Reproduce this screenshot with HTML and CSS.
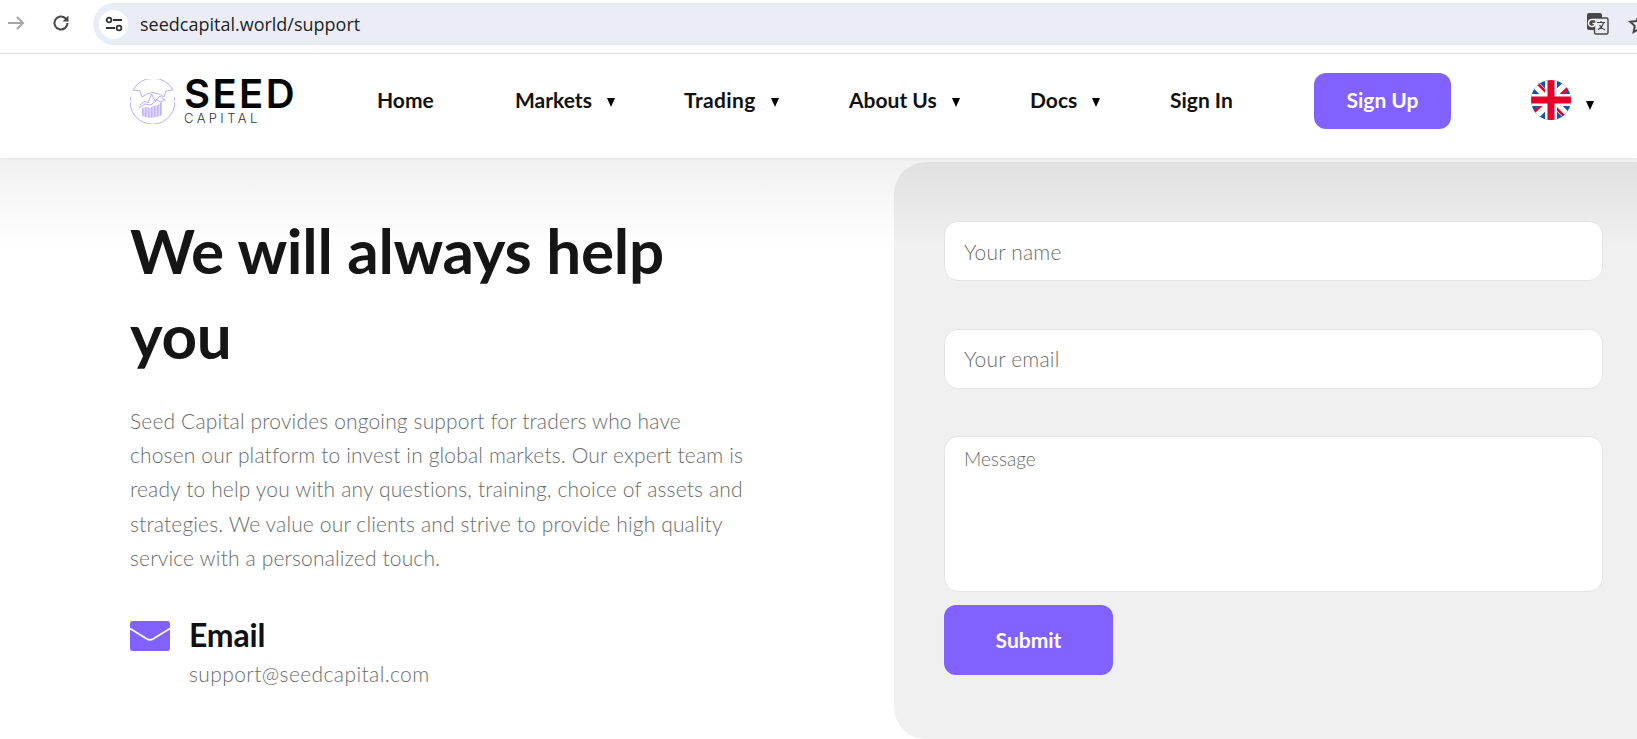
FILE: index.html
```html
<!DOCTYPE html>
<html lang="en">
<head>
    <meta charset="UTF-8">
    <meta name="viewport" content="width=device-width, initial-scale=1.0">
    <title>Support</title>
    <link rel="stylesheet" href="styles.css">
</head>
<body>
    <div class="browser-bar">
        <svg class="bar-icon arrow" width="20" height="20" viewBox="0 0 20 20"><path d="M2 10h15M11 4l6 6-6 6" fill="none" stroke="#a6a6a6" stroke-width="2"/></svg>
        <svg class="bar-icon reload" width="20" height="20" viewBox="0 0 20 20"><path d="M16.500 10a6.500 6.500 0 1 1-2-4.700L16.500 7" fill="none" stroke="#474747" stroke-width="2"/><path d="M17.500 2.500v6h-6z" fill="#474747"/></svg>
        <div class="omnibox">
            <span class="site-icon">
                <svg width="18" height="16" viewBox="0 0 18 16"><circle cx="4" cy="4" r="2.400" fill="none" stroke="#333" stroke-width="1.800"/><path d="M8 4h9M1 12h9" stroke="#333" stroke-width="2" fill="none"/><circle cx="14" cy="12" r="2.400" fill="none" stroke="#333" stroke-width="1.800"/></svg>
            </span>
            <span class="url">seedcapital.world/support</span>
            <svg class="translate" width="22" height="22" viewBox="0 0 22 22"><rect x="0" y="0" width="15" height="17" rx="2" fill="#474747"/><rect x="7.500" y="5" width="13.500" height="16" rx="1.500" fill="#eaedf6" stroke="#474747" stroke-width="1.400"/><path d="M10.500 3.500h-4a3.500 3.500 0 1 0 3.500 4H7" transform="translate(-1.500 3)" fill="none" stroke="#fff" stroke-width="1.500"/><path d="M10 9.500h8M14 8v2M16.500 9.500c-1 4-3 6-5.500 7M12.500 12c1 2 3 4 5.500 5" fill="none" stroke="#474747" stroke-width="1.200"/></svg>
            <svg class="star" width="22" height="22" viewBox="0 0 22 22"><path d="M11 2.500l2.600 5.600 6.100.7-4.500 4.200 1.200 6-5.400-3-5.400 3 1.200-6-4.500-4.200 6.100-.7z" fill="none" stroke="#474747" stroke-width="2"/></svg>
        </div>
    </div>

    <header class="nav">
        <a class="logo">
            <svg class="logo-mark" width="45" height="45" viewBox="0 0 45 45">
                <defs>
                    <pattern id="barStripes" width="1.500" height="4" patternUnits="userSpaceOnUse"><rect width="1" height="4" fill="#b9abf7"/></pattern>
                </defs>
                <g fill="none" stroke="#a897f5" stroke-width="0.8">
                    <path d="M3 11A23 23 0 0 1 43 11"/>
                    <path d="M3 11L10 12L12 18Q23 9 34 18L36 12L43 11"/>
                    <path d="M0.500 18A22.500 22.500 0 1 0 44.500 18"/>
                    <path d="M10 26L15 22L18 24L21.600 15L25 22L30 17L35.700 22"/>
                    <path d="M9 29L15 25L21 26L26.700 21L31 23L35 20"/>
                </g>
                <path d="M12 29l4-1 4 1 3-2 4-.5 5-4V36c-5 3.500-15 3.500-20 1z" fill="url(#barStripes)"/>
            </svg>
            <span class="logo-text">
                <span class="logo-seed">SEED</span>
                <span class="logo-capital">CAPITAL</span>
            </span>
        </a>
        <nav class="menu">
            <a class="menu-item home">Home</a>
            <a class="menu-item markets">Markets<i class="caret"></i></a>
            <a class="menu-item trading">Trading<i class="caret"></i></a>
            <a class="menu-item about">About Us<i class="caret"></i></a>
            <a class="menu-item docs">Docs<i class="caret"></i></a>
            <a class="menu-item signin">Sign In</a>
            <a class="signup-btn">Sign Up</a>
            <span class="lang">
                <svg class="flag" width="40" height="40" viewBox="0 0 40 40">
                    <defs><clipPath id="flagClip"><circle cx="20" cy="20" r="20"/></clipPath></defs>
                    <g clip-path="url(#flagClip)">
                        <rect width="40" height="40" fill="#0a57ad"/>
                        <path d="M0 0L40 40M40 0L0 40" stroke="#fff" stroke-width="8"/>
                        <path d="M3 0L20 17M37 40L20 23M40 5L24 20M0 35L16 20" stroke="#e4002b" stroke-width="2.500"/>
                        <path d="M20 0v40M0 20h40" stroke="#fff" stroke-width="12"/>
                        <path d="M20 0v40M0 20h40" stroke="#e4002b" stroke-width="7"/>
                    </g>
                </svg>
                <i class="caret"></i>
            </span>
        </nav>
    </header>

    <main class="support">
        <section class="intro">
            <h1>We will always help you</h1>
            <p class="lead">Seed Capital provides ongoing support for traders who have<br>chosen our platform to invest in global markets. Our expert team is<br>ready to help you with any questions, training, choice of assets and<br>strategies. We value our clients and strive to provide high quality<br>service with a personalized touch.</p>
            <div class="contact">
                <svg class="mail-icon" width="40" height="31" viewBox="0 0 40 31"><rect width="40" height="30" rx="3" fill="#8162ff"/><path d="M0 7.500l17 10.500q3 1.800 6 0l17-10.500" fill="none" stroke="#fff" stroke-width="1.800"/></svg>
                <div>
                    <h3>Email</h3>
                    <div class="contact-value">support@seedcapital.com</div>
                </div>
            </div>
        </section>
        <section class="form-panel">
            <form class="support-form">
                <input type="text" placeholder="Your name">
                <input type="text" placeholder="Your email">
                <textarea placeholder="Message"></textarea>
                <button type="button">Submit</button>
            </form>
        </section>
    </main>
</body>
</html>
```

FILE: styles.css
```css
* {
    box-sizing: border-box;
}
html, body {
    margin: 0;
    height: 739px;
    overflow: hidden;
}
body {
    font-family: "Lato", Arial, sans-serif;
    background: #fff;
    color: #111;
}

/* browser chrome */
.browser-bar {
    height: 54px;
    display: flex;
    align-items: flex-start;
    padding-top: 3px;
    border-bottom: 1px solid #dfdfdf;
    background: #fff;
}
.bar-icon {
    margin-top: 10px;
    flex-shrink: 0;
}
.arrow {
    margin-left: 6px;
}
.reload {
    margin-left: 25px;
}
.omnibox {
    margin-left: 22px;
    width: 1560px;
    height: 42px;
    flex-shrink: 0;
    background: #eaedf6;
    border-radius: 21px 0 0 21px;
    display: flex;
    align-items: center;
    padding-left: 6px;
}
.site-icon {
    width: 29px;
    height: 29px;
    background: #fff;
    border-radius: 50%;
    display: flex;
    align-items: center;
    justify-content: center;
}
.url {
    margin-left: 12px;
    font-family: "Open Sans", sans-serif;
    font-size: 18px;
    color: #1f1f1f;
}
.translate {
    margin-left: 1227px;
}
.star {
    margin-left: 19px;
}

/* header */
.nav {
    height: 104px;
    display: flex;
    align-items: center;
    padding: 0 0 10px 130px;
    background: #fff;
    position: relative;
    box-shadow: 0 1px 3px rgba(0, 0, 0, 0.06);
}
.logo {
    display: flex;
    align-items: center;
    gap: 9px;
    width: 247px;
    height: 56px;
}
.logo-text {
    display: flex;
    flex-direction: column;
    gap: 3px;
}
.logo-seed {
    font-family: "Inter", sans-serif;
    font-weight: 600;
    font-size: 40px;
    line-height: 31px;
    color: #050505;
    letter-spacing: 2.400px;
}
.logo-capital {
    font-family: "Inter", sans-serif;
    font-weight: 300;
    font-size: 13px;
    line-height: 13px;
    letter-spacing: 3.400px;
    color: #333;
}
.menu {
    display: flex;
    align-items: center;
}
.menu-item {
    font-size: 21px;
    font-weight: 700;
    color: #111;
    display: flex;
    align-items: center;
    padding-bottom: 3px;
}
.home {
    width: 138px;
}
.markets {
    width: 169px;
}
.trading {
    width: 165px;
    letter-spacing: 0.4px;
}
.about {
    width: 181px;
}
.docs {
    width: 140px;
}
.signin {
    width: 144px;
}
.caret {
    display: inline-block;
    margin-left: 15px;
    margin-top: 6px;
    border-left: 4.500px solid transparent;
    border-right: 4.500px solid transparent;
    border-top: 9px solid #000;
}
.signup-btn {
    width: 137px;
    height: 56px;
    padding-bottom: 3px;
    background: #8162ff;
    color: #fff;
    font-size: 21px;
    font-weight: 700;
    border-radius: 12px;
    display: flex;
    align-items: center;
    justify-content: center;
}
.lang {
    margin-left: 80px;
    display: flex;
    align-items: center;
}
.flag {
    margin-top: -2px;
}
.lang .caret {
    margin-top: 8px;
}

/* page */
.support {
    display: grid;
    grid-template-columns: 894px 1fr;
    height: 581px;
    background: linear-gradient(to bottom, #f1f1f1, #fff 90px);
}
.intro {
    padding: 50px 100px 0 130px;
}
h1 {
    margin: 0;
    font-size: 62px;
    line-height: 85px;
    font-weight: 700;
    color: #151515;
    width: 620px;
    letter-spacing: -0.3px;
}
.lead {
    margin: 26px 0 0;
    width: 660px;
    font-size: 21px;
    line-height: 34.200px;
    font-weight: 300;
    letter-spacing: 0.15px;
    white-space: nowrap;
    color: #6c6c6c;
}
.contact {
    margin-top: 44px;
    display: flex;
    gap: 19px;
}
.mail-icon {
    margin-top: 2px;
}
.contact h3 {
    margin: 0;
    font-size: 32px;
    line-height: 32px;
    font-weight: 700;
    letter-spacing: -0.2px;
    color: #111;
}
.contact-value {
    margin-top: 10px;
    font-size: 21px;
    font-weight: 300;
    letter-spacing: 0.4px;
    color: #6c6c6c;
}
.form-panel {
    margin-top: 4px;
    background: linear-gradient(to bottom, #e1e1e1, #f0f0f0 85px);
    border-radius: 32px 0 0 32px;
    padding: 59px 34px 0 50px;
}
.support-form {
    display: flex;
    flex-direction: column;
}
input, textarea {
    width: 100%;
    background: #fff;
    border: 1px solid #e5e5e5;
    border-radius: 14px;
    font-family: "Lato", Arial, sans-serif;
    font-weight: 300;
    outline: none;
    resize: none;
}
input {
    height: 60px;
    margin-bottom: 47.500px;
    padding: 0 19px;
    font-size: 21px;
    letter-spacing: 0.2px;
}
textarea {
    height: 156px;
    padding: 10px 19px;
    font-size: 19px;
}
input::placeholder, textarea::placeholder {
    color: #6c6c6c;
    opacity: 1;
}
button {
    width: 169px;
    height: 70px;
    margin-top: 13px;
    padding-bottom: 2px;
    background: #8162ff;
    color: #fff;
    border: none;
    border-radius: 12px;
    font-family: "Lato", Arial, sans-serif;
    font-size: 21px;
    font-weight: 700;
}
```
